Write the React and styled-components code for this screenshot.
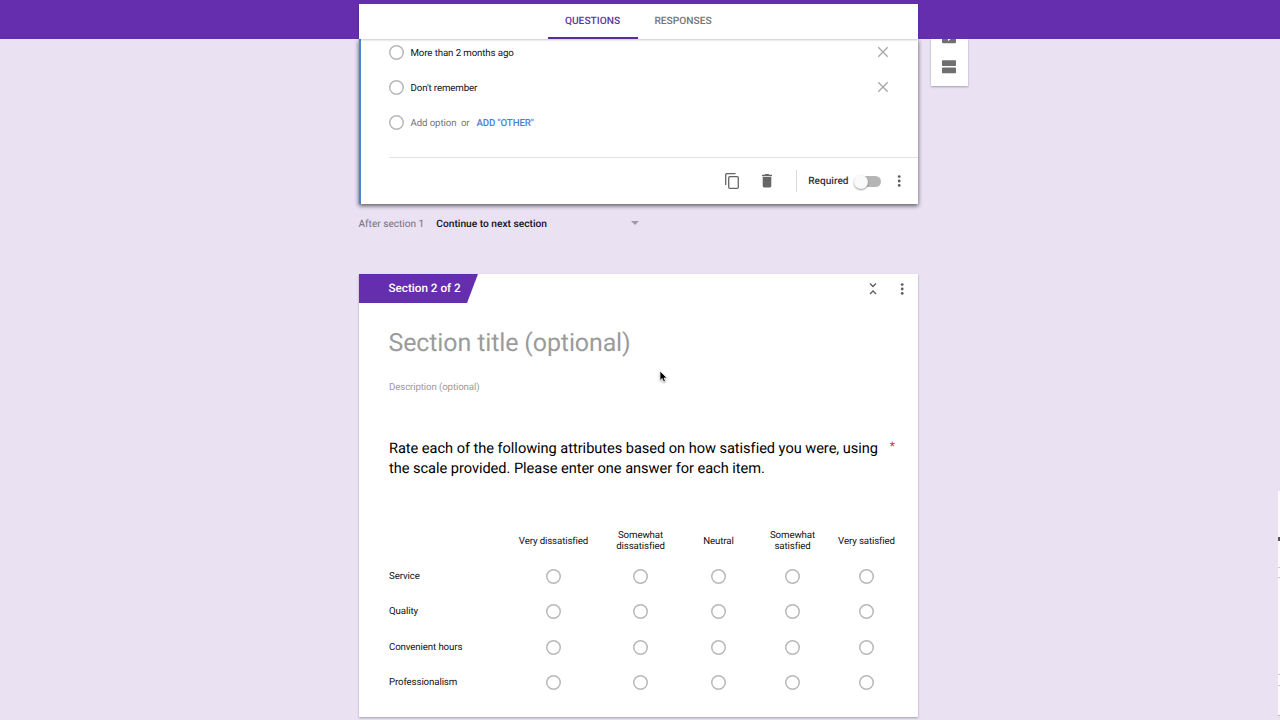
import React from 'react';
import styled, { createGlobalStyle } from 'styled-components';

const GlobalStyle = createGlobalStyle`
    * {
        box-sizing: border-box;
    }
    body {
        margin: 0;
        background: #eae1f3;
        font-family: 'Roboto', sans-serif;
        color: #111;
        overflow: hidden;
        text-rendering: geometricPrecision;
    }
`;

const Page = styled.div`
    position: relative;
    width: 1280px;
    height: 720px;
    overflow: hidden;
    display: flex;
    flex-direction: column;
    background: #eae1f3;
`;

const Header = styled.header`
    position: relative;
    z-index: 1;
    flex: none;
    height: 39px;
    padding: 4px 362px 0 359px;
    background: #642eae;
`;

const Tabs = styled.nav`
    height: 35px;
    display: flex;
    justify-content: center;
    background: #fff;
    box-shadow: 0 1px 2px rgba(0, 0, 0, 0.22);
`;

const Tab = styled.a`
    width: ${({ $active }) => ($active ? '90px' : '91px')};
    padding: 3px 1px 0 0;
    line-height: 30px;
    text-align: center;
    font-size: 10.2px;
    font-weight: 500;
    color: ${({ $active }) => ($active ? '#5c35a0' : '#757575')};
    border-bottom: 2px solid ${({ $active }) => ($active ? '#5a2ca0' : 'transparent')};
`;

const Content = styled.main`
    flex: 1;
    display: flex;
    align-items: flex-start;
    gap: 13px;
    padding-left: 359px;
`;

const Column = styled.div`
    width: 559px;
`;

const QuestionCard = styled.section`
    height: 165px;
    display: flex;
    flex-direction: column;
    justify-content: space-between;
    background: #fff;
    border-left: 2px solid #4a86d4;
    box-shadow: 0 2px 4px rgba(0, 0, 0, 0.45), 0 1px 5px rgba(0, 0, 0, 0.25);
`;

const Options = styled.div`
    margin-top: -4px;
    padding: 0 29px 0 28px;
    display: flex;
    flex-direction: column;
`;

const Option = styled.div`
    height: 35px;
    display: flex;
    align-items: center;
    font-size: 9.7px;
    letter-spacing: -0.11px;
    line-height: 12px;
    color: ${({ $muted }) => ($muted ? '#757575' : '#111')};

    svg {
        margin: 0 0 1px auto;
    }
`;

const Radio = styled.span`
    flex: none;
    width: 15px;
    height: 15px;
    border-radius: 50%;
    box-shadow: inset 0 0 0 1.5px #b8b8b8;
`;

const OptionText = styled.span`
    padding-top: 2px;
    margin-left: 6.5px;
`;

const Or = styled.span`
    padding-top: 2px;
    margin-left: 4.5px;
`;

const AddOther = styled.a`
    padding-top: 2px;
    margin-left: 7px;
    font-weight: 500;
    color: #4a7fd6;
`;

const CardActions = styled.div`
    height: 47px;
    margin-left: 28px;
    padding-right: 14px;
    display: flex;
    align-items: center;
    justify-content: flex-end;
    border-top: 1px solid #e2e2e2;
`;

const ActionIcons = styled.div`
    display: flex;
    align-items: center;
    gap: 23px;
`;

const Divider = styled.span`
    width: 1px;
    height: 22px;
    margin: 0 11.5px 0 24px;
    background: #dcdcdc;
`;

const Required = styled.span`
    margin-right: 6.5px;
    font-size: 10.1px;
    font-weight: 500;
    color: #333;
`;

const Switch = styled.span`
    width: 26px;
    height: 11px;
    margin: 1px 13px 0 0;
    border-radius: 6px;
    background: #b5b5b5;

    &::before {
        content: '';
        display: block;
        width: 14px;
        height: 14px;
        margin: -1px 0 0 -1px;
        border-radius: 50%;
        background: #fafafa;
        box-shadow: 0 1px 2px rgba(0, 0, 0, 0.4);
    }
`;

const AfterSection = styled.div`
    height: 70px;
    margin-left: -0.5px;
    padding-top: 14px;
    display: flex;
    align-items: flex-start;
    font-size: 10.1px;
    line-height: 14px;
    color: #757080;
`;

const NextSelect = styled.div`
    width: 203px;
    margin-left: 12px;
    display: flex;
    align-items: center;
    justify-content: space-between;
    font-size: 10.2px;
    font-weight: 500;
    color: #14101a;
`;

const Caret = styled.span`
    border: 4px solid transparent;
    border-top-color: #9e98a8;
    border-bottom: 0;
    margin-top: -4px;
`;

const SectionCard = styled.section`
    height: 443px;
    background: #fff;
    box-shadow: 0 1px 2px rgba(0, 0, 0, 0.3);
`;

const SectionTop = styled.div`
    height: 29px;
    padding-right: 11px;
    display: flex;
    align-items: center;
    justify-content: space-between;
`;

const SectionBadge = styled.div`
    width: 119px;
    height: 29px;
    padding-left: 29.5px;
    line-height: 28px;
    font-size: 11.7px;
    font-weight: 500;
    color: #fff;
    background: #642eae;
    clip-path: polygon(0 0, 100% 0, 108px 100%, 0 100%);
`;

const SectionIcons = styled.div`
    display: flex;
    align-items: center;
    gap: 20px;
`;

const SectionBody = styled.div`
    padding: 0 17px 0 30px;
`;

const Title = styled.h1`
    margin: 0 0 0 -0.5px;
    padding-top: 24px;
    font-size: 25px;
    font-weight: 400;
    letter-spacing: -0.13px;
    line-height: 34px;
    color: #9b9b9b;
`;

const Description = styled.p`
    margin: 19px 0 0;
    font-size: 9.7px;
    letter-spacing: -0.12px;
    line-height: 16px;
    color: #9b9b9b;
`;

const Question = styled.div`
    margin-top: 42px;
    display: flex;
    justify-content: space-between;
    font-size: 14.6px;
    letter-spacing: -0.04px;
    line-height: 20px;
    color: #000;
    white-space: nowrap;
`;

const Asterisk = styled.span`
    margin-right: 6px;
    font-size: 12px;
    line-height: 16px;
    color: #c2385a;
`;

const Grid = styled.div`
    margin-top: 45px;
    display: grid;
    grid-template-columns: 121px 87px 87px 69px 79px 69px;
    grid-template-rows: 36px 35px 35px 36px 34px;
    align-items: center;
    justify-items: center;
`;

const ColumnLabel = styled.span`
    padding-top: ${({ $wrapped }) => ($wrapped ? 0 : '1px')};
    margin-top: ${({ $wrapped }) => ($wrapped ? '-1px' : 0)};
    font-size: 9.7px;
    letter-spacing: -0.12px;
    line-height: 11px;
    text-align: center;
    white-space: pre;
`;

const RowLabel = styled.span`
    justify-self: start;
    padding-top: 1px;
    font-size: 9.7px;
    letter-spacing: -0.12px;
    line-height: 12px;
`;

const SideToolbar = styled.aside`
    width: 37px;
    height: 47px;
    padding-right: 1px;
    display: flex;
    flex-direction: column;
    align-items: center;
    background: #fff;
    box-shadow: 0 1px 2px rgba(0, 0, 0, 0.3);
`;

// A second window peeks in along the right edge of the screen
const EdgeSliver = styled.div`
    position: absolute;
    top: 491px;
    right: 0;
    width: 2px;
    height: 225px;
    background: #fbfafc;
    border-bottom: 1px solid #b9b5bf;
`;

const EdgeMark = styled.div`
    height: ${({ $dark }) => ($dark ? '4px' : '1px')};
    margin-top: ${({ $gap }) => $gap}px;
    background: ${({ $dark }) => ($dark ? '#555' : '#ccc8d0')};
`;

const Cursor = styled.svg`
    position: absolute;
    left: 659px;
    top: 370px;
    filter: drop-shadow(0 1px 1px rgba(0, 0, 0, 0.3));
`;

const CloseIcon = () => (
    <svg width="12" height="12" viewBox="0 0 12 12" stroke="#a6a6a6" strokeWidth="1.3">
        <path d="M1.300 1.300l9.400 9.400M10.700 1.300l-9.400 9.400" />
    </svg>
);

const MoreIcon = () => (
    <svg width="10" height="14" viewBox="0 0 10 14" fill="#5f5f5f">
        <circle cx="5.2" cy="2.6" r="1.4" />
        <circle cx="5.2" cy="7" r="1.4" />
        <circle cx="5.2" cy="11.4" r="1.4" />
    </svg>
);

const CopyIcon = () => (
    <svg width="14" height="16" viewBox="0 0 14 16" fill="none" stroke="#666" strokeWidth="1.3">
        <path d="M.7 12V1.800Q.7.7 1.800.7H10.500" />
        <rect x="3.7" y="3.7" width="9.6" height="11.6" rx="1" />
    </svg>
);

const TrashIcon = () => (
    <svg width="10" height="14" viewBox="0 0 10 14" fill="#666">
        <path d="M0 .8h2.700L3.400 0h3.200l.7.800H10v1.400H0zM.7 3.100h8.600v9q0 1.400-1.400 1.400H2.100q-1.400 0-1.400-1.400z" />
    </svg>
);

const CollapseIcon = () => (
    <svg width="8" height="12" viewBox="0 0 8 12" fill="none" stroke="#5f5f5f" strokeWidth="1.4">
        <path d="M1 .6l3 3 3-3M1 11l3-3 3 3" />
    </svg>
);

const ToolbarIcons = () => (
    <svg width="14" height="35" viewBox="0 0 14 35" fill="#6f6f6f">
        <path d="M0 0h14v3q0 1.200-1.200 1.200H1.200Q0 4.200 0 3z" />
        <path d="M6 0h2.500L6 2.200z" fill="#fff" />
        <rect y="21.2" width="14" height="5.800" rx=".7" />
        <rect y="28.5" width="14" height="5.800" rx=".7" />
    </svg>
);

const options = ['More than 2 months ago', "Don't remember"];

const columns = [
    'Very dissatisfied',
    'Somewhat\ndissatisfied',
    'Neutral',
    'Somewhat\nsatisfied',
    'Very satisfied',
];

const rows = ['Service', 'Quality', 'Convenient hours', 'Professionalism'];

const App = () => (
    <Page>
        <GlobalStyle />
        <Header>
            <Tabs>
                <Tab $active>QUESTIONS</Tab>
                <Tab>RESPONSES</Tab>
            </Tabs>
        </Header>
        <Content>
            <Column>
                <QuestionCard>
                    <Options>
                        {options.map((option) => (
                            <Option key={option}>
                                <Radio />
                                <OptionText>{option}</OptionText>
                                <CloseIcon />
                            </Option>
                        ))}
                        <Option $muted>
                            <Radio />
                            <OptionText>Add option</OptionText>
                            <Or>or</Or>
                            <AddOther>ADD "OTHER"</AddOther>
                        </Option>
                    </Options>
                    <CardActions>
                        <ActionIcons>
                            <CopyIcon />
                            <TrashIcon />
                        </ActionIcons>
                        <Divider />
                        <Required>Required</Required>
                        <Switch />
                        <MoreIcon />
                    </CardActions>
                </QuestionCard>
                <AfterSection>
                    After section 1
                    <NextSelect>
                        Continue to next section
                        <Caret />
                    </NextSelect>
                </AfterSection>
                <SectionCard>
                    <SectionTop>
                        <SectionBadge>Section 2 of 2</SectionBadge>
                        <SectionIcons>
                            <CollapseIcon />
                            <MoreIcon />
                        </SectionIcons>
                    </SectionTop>
                    <SectionBody>
                        <Title>Section title (optional)</Title>
                        <Description>Description (optional)</Description>
                        <Question>
                            <span>
                                Rate each of the following attributes based on how satisfied you were, using
                                <br />
                                the scale provided. Please enter one answer for each item.
                            </span>
                            <Asterisk>*</Asterisk>
                        </Question>
                        <Grid>
                            <span />
                            {columns.map((column) => (
                                <ColumnLabel key={column} $wrapped={column.includes('\n')}>
                                    {column}
                                </ColumnLabel>
                            ))}
                            {rows.map((row) => (
                                <React.Fragment key={row}>
                                    <RowLabel>{row}</RowLabel>
                                    {columns.map((column) => (
                                        <Radio key={column} />
                                    ))}
                                </React.Fragment>
                            ))}
                        </Grid>
                    </SectionBody>
                </SectionCard>
            </Column>
            <SideToolbar>
                <ToolbarIcons />
            </SideToolbar>
        </Content>
        <EdgeSliver>
            <EdgeMark $dark $gap={46} />
            <EdgeMark $gap={26} />
            <EdgeMark $gap={9} />
            <EdgeMark $gap={96} />
            <EdgeMark $gap={10} />
        </EdgeSliver>
        <Cursor width="9" height="13" viewBox="0 0 9 13">
            <path
                d="M1 1v9.500l2.200-2 1.500 3.500 1.700-.7L5 8h3z"
                fill="#000"
                stroke="#fff"
                strokeWidth=".7"
            />
        </Cursor>
    </Page>
);

export default App;
